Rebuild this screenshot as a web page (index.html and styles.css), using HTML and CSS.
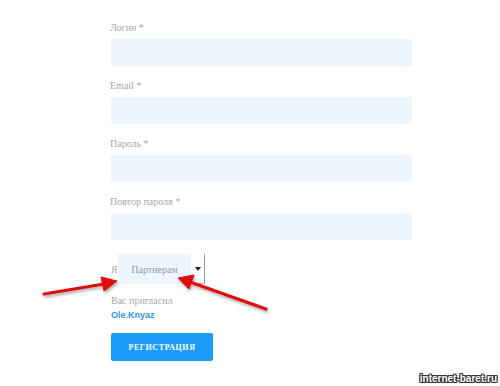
FILE: index.html
```html
<!DOCTYPE html>
<html lang="ru">
<head>
    <meta charset="UTF-8">
    <title>Регистрация</title>
    <link rel="stylesheet" href="styles.css">
</head>
<body>
    <form class="reg-form">
        <div class="field">
            <label class="field-label">Логин *</label>
            <div class="field-input"></div>
        </div>
        <div class="field">
            <label class="field-label">Email *</label>
            <div class="field-input"></div>
        </div>
        <div class="field">
            <label class="field-label">Пароль *</label>
            <div class="field-input"></div>
        </div>
        <div class="field">
            <label class="field-label">Повтор пароля *</label>
            <div class="field-input"></div>
        </div>

        <div class="who-row">
            <span class="who-label">Я</span>
            <div class="select-box">
                <span class="select-value">Партнерам</span>
                <span class="select-arrow"></span>
            </div>
        </div>

        <div class="invited">Вас пригласил</div>
        <div class="inviter">Ole.Knyaz</div>

        <button type="button" class="submit-btn">РЕГИСТРАЦИЯ</button>
    </form>

    <svg class="arrows" width="500" height="386" viewBox="0 0 500 386">
        <defs>
            <filter id="shadow" x="-20%" y="-50%" width="140%" height="200%">
                <feDropShadow dx="1" dy="2" stdDeviation="1.5" flood-color="#000" flood-opacity="0.35"/>
            </filter>
        </defs>
        <g filter="url(#shadow)" fill="#e01010" stroke="#e01010">
            <line x1="44" y1="294" x2="104" y2="284" stroke-width="3.2" stroke-linecap="round"/>
            <polygon points="117,281 101,277 104,291" stroke-width="1" stroke-linejoin="round"/>
            <line x1="266" y1="309" x2="190" y2="282" stroke-width="3.2" stroke-linecap="round"/>
            <polygon points="178,278 194,275 189,289" stroke-width="1" stroke-linejoin="round"/>
        </g>
    </svg>

    <div class="watermark">internet-baret.ru</div>
</body>
</html>
```

FILE: styles.css
```css
body {
    margin: 0;
    background-color: #fff;
    font-family: "Liberation Serif", serif;
    width: 500px;
    height: 386px;
    overflow: hidden;
}
.reg-form {
    width: 301px;
    padding: 22px 0 0 111px;
}
.field {
    margin-bottom: 14px;
}
.field-label {
    display: block;
    font-size: 10px;
    line-height: 12px;
    color: #a8a8a8;
    margin-bottom: 5px;
    margin-left: -1px;
}
.field-input {
    height: 27px;
    background-color: #edf5ff;
}
.who-row {
    display: flex;
    align-items: center;
    margin-top: 12px;
}
.who-label {
    font-size: 10px;
    color: #a8a8a8;
    width: 7px;
}
.select-box {
    display: flex;
    width: 87px;
    height: 30px;
}
.select-value {
    flex: 1;
    background-color: #edf5ff;
    font-size: 10px;
    color: #9a9a9a;
    display: flex;
    align-items: center;
    justify-content: center;
}
.select-arrow {
    width: 13px;
    border-right: 1px solid #999;
    border-bottom: 1px solid #aaa;
    display: flex;
    align-items: center;
    justify-content: center;
}
.select-arrow::after {
    content: "";
    border-left: 3px solid transparent;
    border-right: 3px solid transparent;
    border-top: 4px solid #222;
}
.invited {
    margin-top: 11px;
    font-size: 10px;
    color: #a8a8a8;
}
.inviter {
    margin-top: 4px;
    font-family: "Liberation Sans", sans-serif;
    font-weight: bold;
    font-size: 9px;
    color: #2b97e6;
}
.submit-btn {
    margin-top: 13px;
    width: 102px;
    height: 28px;
    border: none;
    border-radius: 2px;
    background-color: #1a9cf6;
    color: #fff;
    font-family: "Liberation Serif", serif;
    font-weight: bold;
    font-size: 8px;
    letter-spacing: 0.6px;
    padding: 0;
}
.arrows {
    position: absolute;
    left: 0;
    top: 0;
    pointer-events: none;
}
.watermark {
    position: absolute;
    right: 3px;
    bottom: 2px;
    font-family: "Liberation Sans", sans-serif;
    font-weight: bold;
    font-size: 10px;
    color: #fff;
    text-shadow: 1px 0 0 #333, -1px 0 0 #333, 0 1px 0 #333, 0 -1px 0 #333, 1px 1px 0 #333, -1px -1px 0 #333, 1px -1px 0 #333, -1px 1px 0 #333;
}
```
